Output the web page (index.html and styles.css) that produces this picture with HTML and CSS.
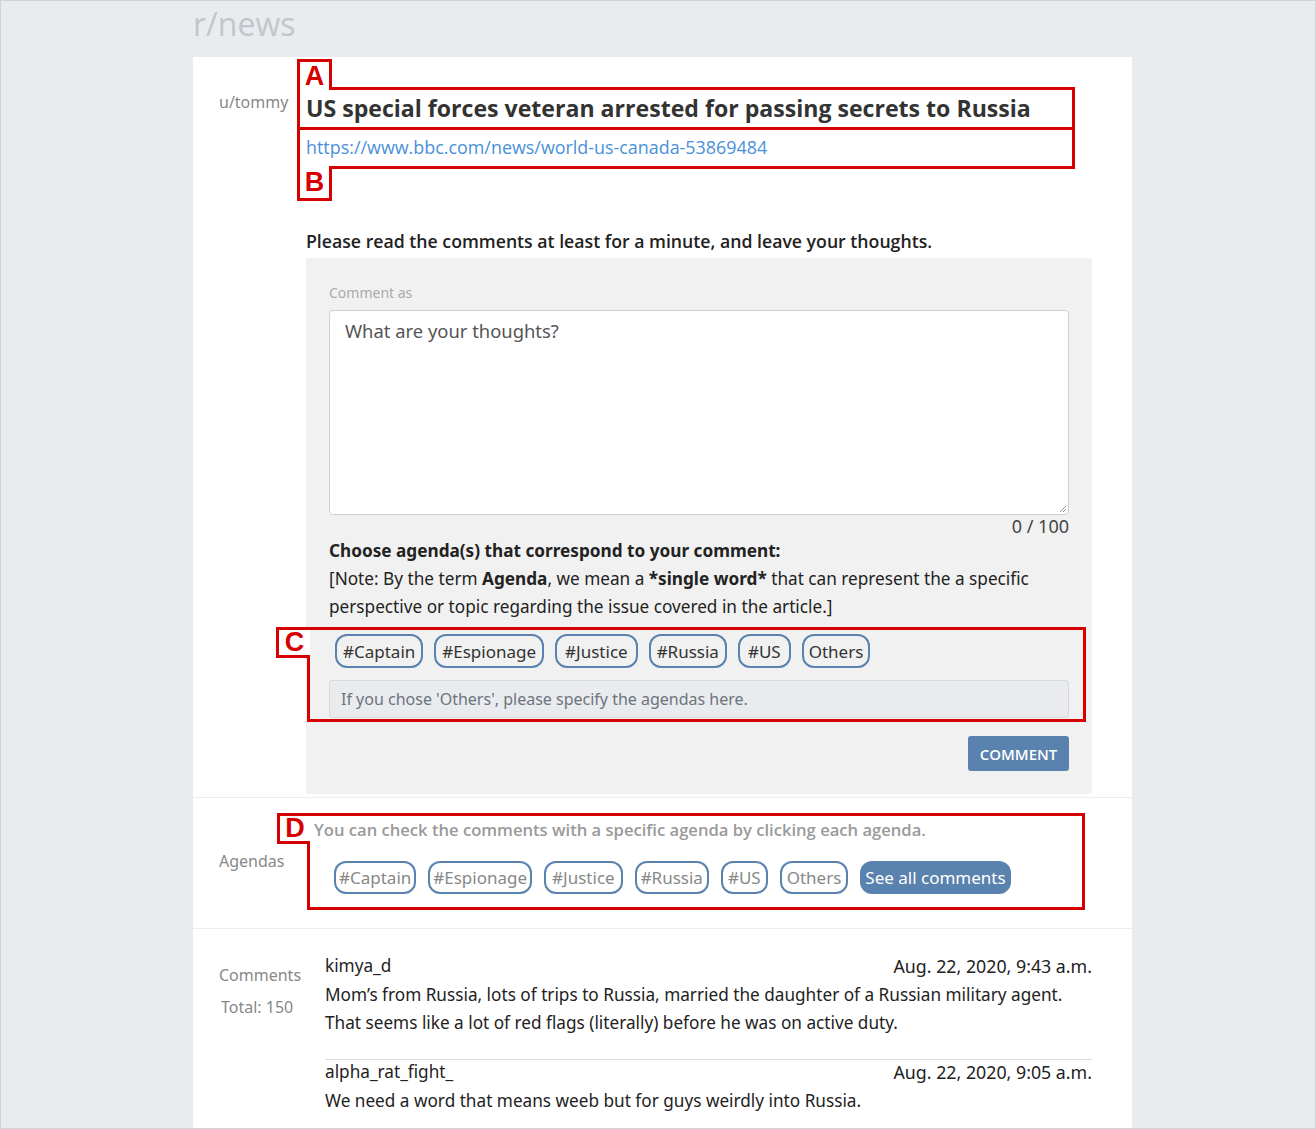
FILE: index.html
```html
<!DOCTYPE html>
<html lang="en">
<head>
<meta charset="utf-8">
<title>r/news</title>
<link rel="stylesheet" href="styles.css">
</head>
<body>
<div class="frame">
  <div class="container">
    <h1 class="sub">r/news</h1>
    <div class="card">
      <section class="post">
        <div class="side">u/tommy</div>
        <div class="main">
          <div class="annot-title">
            <span class="tag tag-a">A</span>
            <h2 class="title">US special forces veteran arrested for passing secrets to Russia</h2>
          </div>
          <div class="annot-link">
            <a class="link" href="#">https://www.bbc.com/news/world-us-canada-53869484</a>
            <span class="tag tag-b">B</span>
          </div>
          <p class="prompt">Please read the comments at least for a minute, and leave your thoughts.</p>
          <div class="box">
            <div class="as">Comment as</div>
            <div class="ta">
              <span class="ph">What are your thoughts?</span>
              <svg class="grip" width="10" height="10" viewBox="0 0 10 10"><path d="M9 3 L3 9 M9 6 L6 9" stroke="#999" stroke-width="1" fill="none"/></svg>
            </div>
            <div class="count">0 / 100</div>
            <p class="choose">Choose agenda(s) that correspond to your comment:</p>
            <p class="note">[Note: By the term <b>Agenda</b>, we mean a <b>*single word*</b> that can represent the a specific perspective or topic regarding the issue covered in the article.]</p>
            <div class="annot-c">
              <span class="tag tag-c">C</span>
              <div class="chips">
                <span class="chip">#Captain</span>
                <span class="chip">#Espionage</span>
                <span class="chip chip-w">#Justice</span>
                <span class="chip">#Russia</span>
                <span class="chip chip-w">#US</span>
                <span class="chip chip-o">Others</span>
              </div>
              <div class="other">If you chose 'Others', please specify the agendas here.</div>
            </div>
            <div class="actions"><button class="btn">COMMENT</button></div>
          </div>
        </div>
      </section>

      <section class="agendas">
        <div class="side side-agendas">Agendas</div>
        <div class="annot-d">
          <span class="tag tag-d">D</span>
          <p class="hint">You can check the comments with a specific agenda by clicking each agenda.</p>
          <div class="chips chips-d">
            <span class="chip chip-g">#Captain</span>
            <span class="chip chip-g">#Espionage</span>
            <span class="chip chip-g chip-gw">#Justice</span>
            <span class="chip chip-g chip-gr">#Russia</span>
            <span class="chip chip-g chip-gm">#US</span>
            <span class="chip chip-g chip-gm">Others</span>
            <span class="chip chip-fill">See all comments</span>
          </div>
        </div>
      </section>

      <section class="comments">
        <div class="side side-comments">
          <div>Comments</div>
          <div class="total">Total: 150</div>
        </div>
        <div class="list">
          <div class="comment">
            <div class="meta"><span class="author">kimya_d</span><span class="date">Aug. 22, 2020, 9:43 a.m.</span></div>
            <p class="body">Mom’s from Russia, lots of trips to Russia, married the daughter of a Russian military agent.<br>That seems like a lot of red flags (literally) before he was on active duty.</p>
          </div>
          <div class="comment">
            <div class="meta"><span class="author">alpha_rat_fight_</span><span class="date">Aug. 22, 2020, 9:05 a.m.</span></div>
            <p class="body">We need a word that means weeb but for guys weirdly into Russia.</p>
          </div>
        </div>
      </section>
    </div>
  </div>
</div>
</body>
</html>
```

FILE: styles.css
```css
* { box-sizing: border-box; }
html, body { margin: 0; padding: 0; }
body {
  font-family: "Noto Sans", "Open Sans", sans-serif;
  color: #222;
  background: #e9ecef;
}
.frame {
  width: 1316px;
  height: 1129px;
  border: 1px solid #cfd3d6;
  overflow: hidden;
  background: #e9ecef;
}
.container {
  margin-left: 192px;
  width: 939px;
}
.sub {
  margin: 0;
  height: 56px;
  line-height: 46px;
  font-family: "Open Sans", sans-serif;
  font-weight: 400;
  font-size: 32px;
  color: #c2c6ca;
}
.card {
  background: #fff;
  min-height: 1100px;
}

/* red annotation parts */
.tag {
  position: absolute;
  display: flex;
  align-items: center;
  justify-content: center;
  border: 3px solid #d60000;
  background: #fff;
  color: #d60000;
  font-family: "Liberation Sans", Arial, sans-serif;
  font-weight: 700;
  font-size: 27px;
  line-height: 1;
}

/* post section */
.post {
  display: grid;
  grid-template-columns: 87px 786px;
  padding: 30px 0 3px 26px;
  border-bottom: 1px solid #eceef0;
}
.side {
  font-size: 16px;
  color: #888;
  line-height: 24px;
}
.post .side { padding-top: 3px; }
.annot-title {
  position: relative;
  margin-left: -9px;
  width: 778px;
  height: 43px;
  border: 3px solid #d60000;
  padding-left: 6px;
}
.tag-a { left: -3px; bottom: 100%; width: 35px; height: 31px; border-bottom: 0; }
.title {
  margin: 0;
  font-family: "Open Sans", sans-serif;
  font-weight: 700;
  font-size: 23.1px;
  line-height: 37px;
  color: #333;
  white-space: nowrap;
}
.annot-link {
  position: relative;
  margin-left: -9px;
  width: 778px;
  height: 39px;
  border: 3px solid #d60000;
  border-top: 0;
  padding-left: 6px;
  line-height: 35px;
}
.tag-b { left: -3px; top: 100%; width: 35px; height: 35px; border-top: 0; }
.link {
  font-family: "Open Sans", sans-serif;
  font-size: 17.9px;
  color: #4a90d9;
  text-decoration: none;
}
.prompt {
  margin: 60px 0 5px;
  font-family: "Open Sans", sans-serif;
  font-weight: 600;
  font-size: 17.7px;
  line-height: 24px;
  color: #222;
}
.box {
  background: #f1f1f1;
  border-radius: 2px;
  padding: 25px 23px 23px;
}
.as {
  font-size: 14px;
  line-height: 20px;
  color: #aaa;
}
.ta {
  position: relative;
  margin-top: 7px;
  height: 205px;
  background: #fff;
  border: 1px solid #cdd0d4;
  border-radius: 4px;
  padding: 7px 15px;
}
.ph {
  font-size: 18.4px;
  line-height: 26px;
  color: #555;
}
.grip { position: absolute; right: 1px; bottom: 1px; }
.count {
  text-align: right;
  font-size: 18px;
  line-height: 22px;
  color: #444;
}
.choose {
  margin: 0;
  font-size: 17.2px;
  font-weight: 700;
  line-height: 28px;
  color: #222;
}
.note {
  margin: 0;
  font-size: 17.2px;
  line-height: 28px;
  color: #222;
}
.annot-c {
  position: relative;
  margin: 6px -17px 0 -22px;
  border: 3px solid #d60000;
  padding: 4px 14px 1px 19px;
}
.tag-c { left: -34px; top: -3px; width: 34px; height: 31px; border-right: 0; }
.chips {
  display: flex;
  flex-wrap: wrap;
  gap: 11px;
  padding-left: 6px;
}
.chip {
  display: inline-flex;
  align-items: center;
  height: 34px;
  padding: 0 6px;
  border: 2px solid #5a82ae;
  border-radius: 12px;
  font-size: 17px;
  color: #333;
  white-space: nowrap;
}
.chip-w { padding: 0 8px; }
.chip-o { padding: 0 5px; }
.other {
  margin-top: 12px;
  height: 38px;
  background: #e9ebee;
  border: 1px solid #d6d9dc;
  border-radius: 3px;
  padding-left: 11px;
  font-size: 16px;
  line-height: 36px;
  color: #6c757d;
}
.actions {
  display: flex;
  justify-content: flex-end;
  margin-top: 14px;
}
.btn {
  width: 101px;
  height: 35px;
  border: 0;
  border-radius: 3px;
  background: #5a82ae;
  color: #fff;
  font-family: "Open Sans", sans-serif;
  font-weight: 600;
  font-size: 15px;
  padding: 0;
}

/* agendas section */
.agendas {
  display: grid;
  grid-template-columns: 88px 778px;
  padding: 15px 0 18px 26px;
  border-bottom: 1px solid #eceef0;
}
.side-agendas {
  padding-top: 36px;
}
.annot-d {
  position: relative;
  border: 3px solid #d60000;
  padding: 2px 0 13px 4px;
}
.tag-d { left: -33px; top: -3px; width: 33px; height: 31px; border-right: 0; }
.hint {
  margin: 0;
  font-family: "Open Sans", sans-serif;
  font-weight: 600;
  font-size: 16.6px;
  line-height: 24px;
  color: #9a9a9a;
}
.chips-d {
  margin-top: 19px;
  padding-left: 20px;
  gap: 12px;
}
.chip-g { color: #888; height: 33px; padding: 0 3px; }
.chip-g.chip-gw { padding: 0 6px; }
.chip-g.chip-gr { padding: 0 4px; }
.chip-g.chip-gm { padding: 0 5px; }
.chip-fill {
  height: 33px;
  background: #5a82ae;
  color: #fff;
  border-color: #5a82ae;
  padding: 0 3px;
}

/* comments */
.comments {
  display: grid;
  grid-template-columns: 106px 767px;
  padding: 25px 0 0 26px;
}
.side-comments {
  line-height: 32px;
  padding-top: 5px;
}
.total { padding-left: 2px; }
.comment + .comment {
  border-top: 1px solid #dcdcdc;
}
.comment { padding-bottom: 22px; }
.meta {
  display: flex;
  justify-content: space-between;
  font-size: 17.2px;
  line-height: 24px;
  color: #222;
  margin-bottom: 3px;
}
.date { font-size: 17.8px; }
.body {
  margin: 0;
  font-size: 17.2px;
  line-height: 28px;
  color: #222;
}
```
